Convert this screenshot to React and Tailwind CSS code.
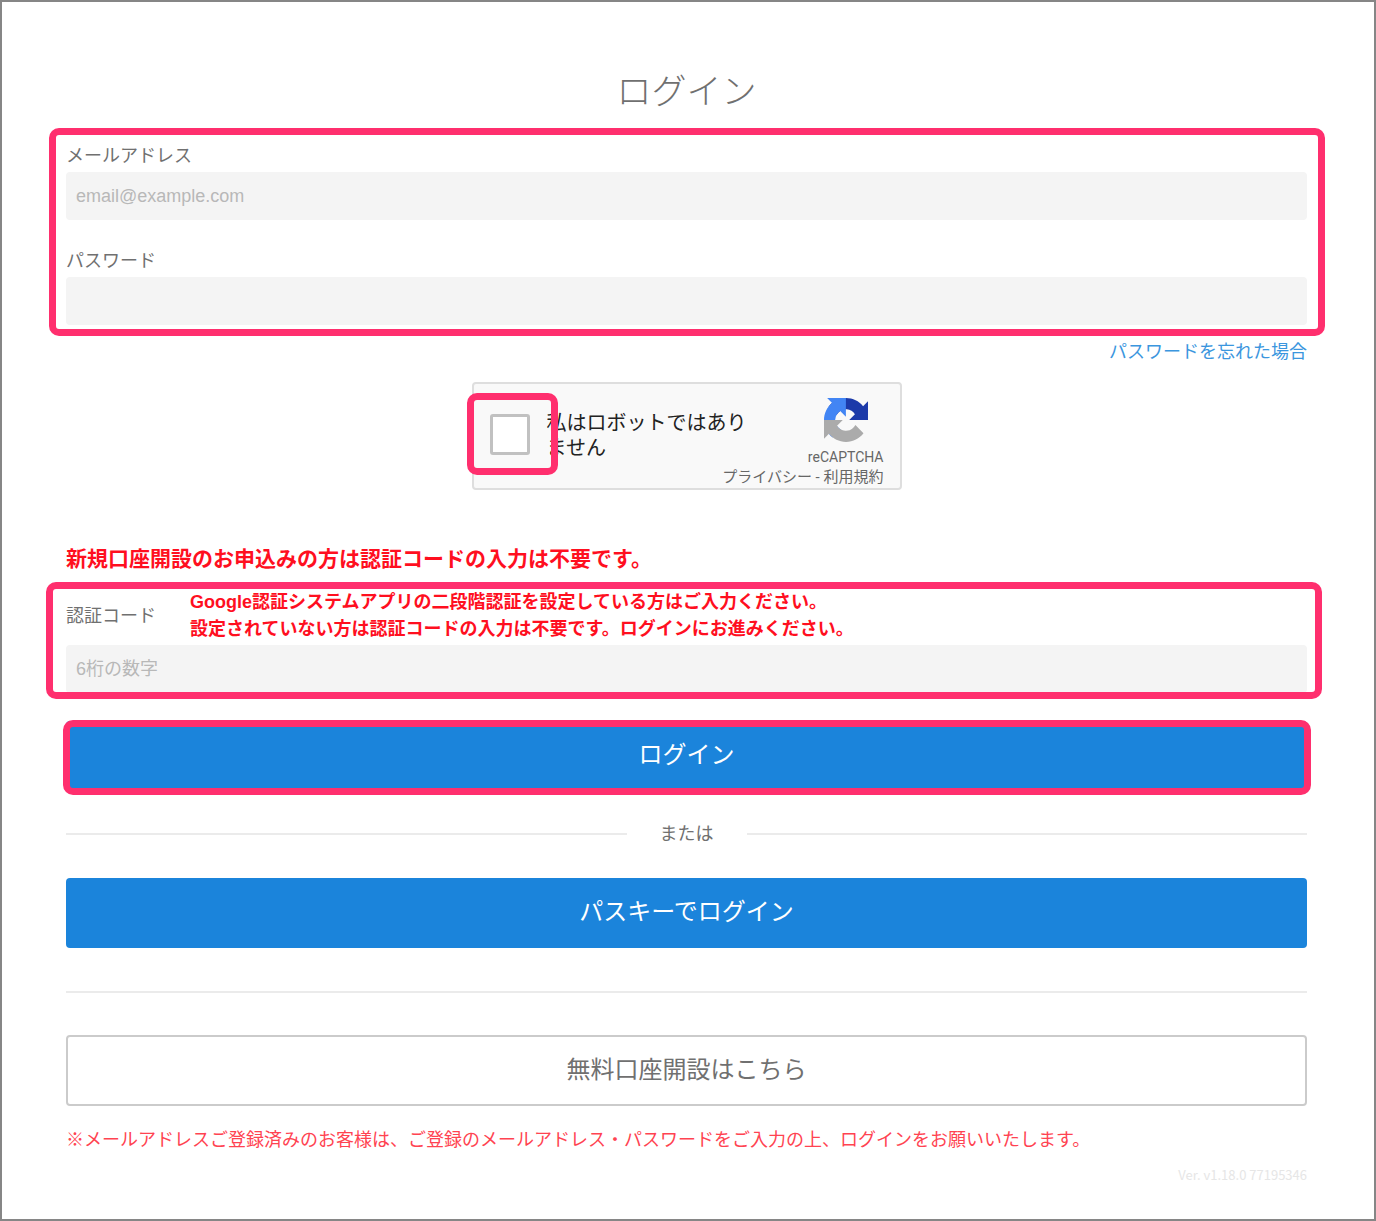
import { useState } from "react";

function Highlight({ className }) {
  return (
    <span
      aria-hidden="true"
      className={`pointer-events-none absolute rounded-[10px] border-[7px] border-[#ff2f6e] ${className}`}
    />
  );
}

function RecaptchaLogo() {
  return (
    <svg viewBox="0 0 64 64" className="h-11 w-11" aria-hidden="true">
      <path
        fill="#1c3aa9"
        d="M64 31.955a33 33 0 0 0-.033-1.37V4.687l-7.16 7.16C50.948 4.674 42.033.093 32.05.093c-10.4 0-19.622 4.96-25.458 12.64l11.736 11.86a15.55 15.55 0 0 1 4.754-5.334c2.05-1.6 4.952-2.906 8.968-2.906.485 0 .86.057 1.135.163 4.976.393 9.288 3.14 11.828 7.124l-8.307 8.307L64 31.953"
      />
      <path
        fill="#4285f4"
        d="M31.862.094a33 33 0 0 0-1.37.033H4.594l7.16 7.16C4.58 13.147 0 22.06 0 32.046c0 10.4 4.96 19.622 12.64 25.458L24.5 45.768a15.55 15.55 0 0 1-5.334-4.754c-1.6-2.05-2.906-4.952-2.906-8.968 0-.485.057-.86.163-1.135.393-4.976 3.14-9.288 7.124-11.828l8.307 8.307L31.86.095"
      />
      <path
        fill="#ababab"
        d="M.001 32.045a33 33 0 0 0 .033 1.37v25.898l7.16-7.16c5.86 7.173 14.774 11.754 24.76 11.754 10.4 0 19.622-4.96 25.458-12.64l-11.736-11.86a15.55 15.55 0 0 1-4.754 5.334c-2.05 1.6-4.952 2.906-8.968 2.906-.485 0-.86-.057-1.135-.163-4.976-.393-9.288-3.14-11.828-7.124l8.307-8.307c-10.522.04-22.4.066-27.295-.005"
      />
    </svg>
  );
}

export default function App() {
  const [email, setEmail] = useState("");
  const [password, setPassword] = useState("");
  const [code, setCode] = useState("");
  const [human, setHuman] = useState(false);

  const inputClass =
    "block h-12 w-full rounded-sm bg-[#f4f4f4] px-[10px] text-lg text-[#555] placeholder:text-[#b8b8b8] outline-none";

  return (
    <div className="min-h-screen border-2 border-[#868686] bg-white pt-16 pr-[67px] pb-8 pl-16 font-['Liberation_Sans','Noto_Sans_CJK_JP',sans-serif] text-[#707070]">
      <h1 className="text-center text-[35px] leading-[52px] font-light">ログイン</h1>

      <form onSubmit={(e) => e.preventDefault()}>
        {/* Email and password */}
        <div className="relative mt-[26px]">
          <label htmlFor="email" className="block text-lg leading-6">
            メールアドレス
          </label>
          <input
            id="email"
            type="email"
            placeholder="email@example.com"
            value={email}
            onChange={(e) => setEmail(e.target.value)}
            className={`mt-1 ${inputClass}`}
          />
          <label htmlFor="password" className="mt-[29px] block text-lg leading-6">
            パスワード
          </label>
          <input
            id="password"
            type="password"
            value={password}
            onChange={(e) => setPassword(e.target.value)}
            className={`mt-1 ${inputClass}`}
          />
          <Highlight className="-top-4 -right-[18px] -bottom-[11px] -left-[17px]" />
        </div>

        <div className="mt-[15px] text-right text-lg leading-6">
          <a href="#forgot" className="text-[#3b96de]">
            パスワードを忘れた場合
          </a>
        </div>

        {/* reCAPTCHA */}
        <div className="mx-auto mt-[18px] flex h-[108px] w-[430px] items-center justify-between rounded border-2 border-[#dedede] bg-[#f9f9f9] pr-4 pl-4 font-['Roboto','Noto_Sans_CJK_JP',sans-serif]">
          <div className="flex items-center gap-[17px]">
            <div className="relative mb-1">
              <input
                id="human"
                type="checkbox"
                checked={human}
                onChange={(e) => setHuman(e.target.checked)}
                className="block h-[41px] w-10 appearance-none rounded-[3px] border-[3px] border-[#c1c1c1] bg-white checked:bg-[#4285f4]"
              />
              <Highlight className="-top-[21px] -right-[28px] -bottom-[20px] -left-[23px] z-10" />
            </div>
            <label htmlFor="human" className="text-xl leading-[25px] text-[#222]">
              私はロボットではあり
              <br />
              ません
            </label>
          </div>
          <div className="flex w-20 flex-col items-end pt-3 text-[#666]">
            <div className="flex flex-col items-center">
              <RecaptchaLogo />
              <span className="mt-[5px] text-sm leading-5">reCAPTCHA</span>
            </div>
            <div className="text-[15px] leading-5 whitespace-nowrap">
              <a href="#privacy">プライバシー</a> - <a href="#terms">利用規約</a>
            </div>
          </div>
        </div>

        {/* Two-factor code */}
        <p className="mt-[55px] text-[21px] leading-7 font-bold text-[#ff0f1f]">
          新規口座開設のお申込みの方は認証コードの入力は不要です。
        </p>
        <div className="relative mt-4">
          <div className="flex items-center gap-[34px]">
            <label htmlFor="code" className="text-lg leading-6">
              認証コード
            </label>
            <p className="text-lg leading-[27px] font-bold text-[#ff0f1f]">
              Google認証システムアプリの二段階認証を設定している方はご入力ください。
              <br />
              設定されていない方は認証コードの入力は不要です。ログインにお進みください。
            </p>
          </div>
          <input
            id="code"
            type="text"
            placeholder="6桁の数字"
            value={code}
            onChange={(e) => setCode(e.target.value)}
            className={`mt-[2px] ${inputClass}`}
          />
          <Highlight className="-top-[7px] -right-[15px] -bottom-[6px] -left-5" />
        </div>

        <div className="relative mt-7">
          <button
            type="submit"
            className="block h-[70px] w-full rounded-sm bg-[#1b84db] pb-[2px] text-2xl text-white"
          >
            ログイン
          </button>
          <Highlight className="-top-px -right-1 -bottom-1 -left-[3px]" />
        </div>

        <div className="mt-[31px] flex items-center">
          <span className="h-[2px] flex-1 bg-[#ebebeb]" />
          <span className="w-[120px] text-center text-lg leading-6">または</span>
          <span className="h-[2px] flex-1 bg-[#ebebeb]" />
        </div>

        <button
          type="button"
          className="mt-8 block h-[70px] w-full rounded-sm bg-[#1b84db] pb-[2px] text-2xl text-white"
        >
          パスキーでログイン
        </button>
      </form>

      <hr className="mt-[43px] border-t-2 border-[#ebebeb]" />

      <button
        type="button"
        className="mt-[42px] block h-[71px] w-full rounded border-2 border-[#cbcbcb] bg-white pb-[2px] text-2xl"
      >
        無料口座開設はこちら
      </button>

      <p className="mt-[22px] text-lg leading-6 text-[#ff4351]">
        ※メールアドレスご登録済みのお客様は、ご登録のメールアドレス・パスワードをご入力の上、ログインをお願いいたします。
      </p>
      <p className="mt-[13px] text-right font-['Noto_Sans_CJK_JP',sans-serif] text-[13px] leading-5 text-[#e6e6e6]">
        Ver. v1.18.0 77195346
      </p>
    </div>
  );
}
